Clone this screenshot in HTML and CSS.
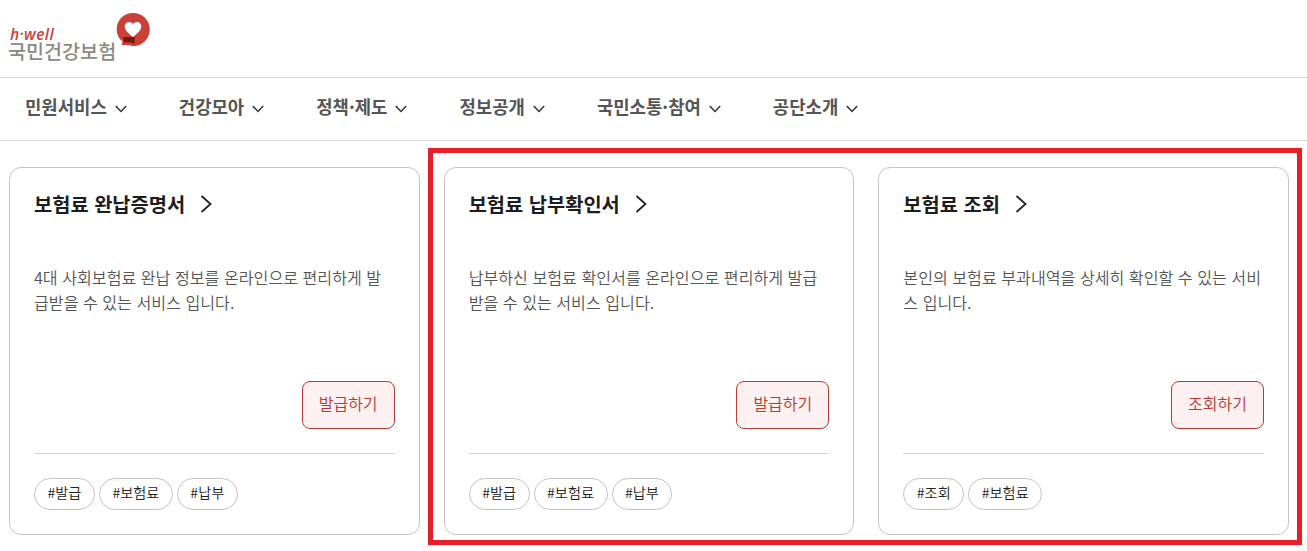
FILE: index.html
```
<!DOCTYPE html>
<html lang="ko">
<head>
    <meta charset="UTF-8">
    <meta name="viewport" content="width=device-width, initial-scale=1.0">
    <title>국민건강보험</title>
    <link rel="stylesheet" href="styles.css">
</head>
<body>

    <!-- HEADER -->
    <header class="header">
        <a class="logo" href="#">
            <span class="logo-text">
                <span class="logo-en">h·well</span>
                <span class="logo-ko">국민건강보험</span>
            </span>
            <svg class="logo-mark" viewBox="0 0 34 35" width="34" height="35">
                <path d="M17 0C26.5 0 33.8 7.3 33.8 16.5S26.5 33.2 17 33.2C13 31.800 9 31.800 5.600 32.500L6.600 28.500C2.500 25.500.7 21 .7 16.500.7 7.300 7.500 0 17 0Z" fill="#cb4138"/>
                <path d="M7.500 24H18.700V30.500C15 29.200 11 29 7.500 29.500Z" fill="#7d1511"/>
                <path d="M17 24C13 21 8.700 17.500 8.700 13.300 8.700 10.500 10.600 8.900 12.900 8.900 14.800 8.900 16.200 9.700 17 11.300 17.800 9.700 19.200 8.900 21.100 8.900 23.500 8.900 25.300 10.500 25.300 13.300 25.300 17.500 21 21 17 24Z" fill="#fff"/>
            </svg>
        </a>
    </header>

    <!-- MENU -->
    <nav class="menu">
        <a href="#">민원서비스 <svg class="arrow-down" viewBox="0 0 12 8"><path d="M.8 1 6 6.500 11.200 1"/></svg></a>
        <a href="#">건강모아 <svg class="arrow-down" viewBox="0 0 12 8"><path d="M.8 1 6 6.500 11.200 1"/></svg></a>
        <a href="#">정책·제도 <svg class="arrow-down" viewBox="0 0 12 8"><path d="M.8 1 6 6.500 11.200 1"/></svg></a>
        <a href="#">정보공개 <svg class="arrow-down" viewBox="0 0 12 8"><path d="M.8 1 6 6.500 11.200 1"/></svg></a>
        <a href="#">국민소통·참여 <svg class="arrow-down" viewBox="0 0 12 8"><path d="M.8 1 6 6.500 11.200 1"/></svg></a>
        <a href="#">공단소개 <svg class="arrow-down" viewBox="0 0 12 8"><path d="M.8 1 6 6.500 11.200 1"/></svg></a>
    </nav>

    <!-- SERVICE CARDS -->
    <main class="cards">
        <section class="card">
            <h2>보험료 완납증명서 <svg class="arrow-right" viewBox="0 0 12 18"><path d="M1.500 1 10.500 9 1.500 17"/></svg></h2>
            <p>4대 사회보험료 완납 정보를 온라인으로 편리하게 발급받을 수 있는 서비스 입니다.</p>
            <a class="btn" href="#">발급하기</a>
            <div class="tags">
                <span>#발급</span>
                <span>#보험료</span>
                <span>#납부</span>
            </div>
        </section>
        <section class="card">
            <h2>보험료 납부확인서 <svg class="arrow-right" viewBox="0 0 12 18"><path d="M1.500 1 10.500 9 1.500 17"/></svg></h2>
            <p>납부하신 보험료 확인서를 온라인으로 편리하게 발급받을 수 있는 서비스 입니다.</p>
            <a class="btn" href="#">발급하기</a>
            <div class="tags">
                <span>#발급</span>
                <span>#보험료</span>
                <span>#납부</span>
            </div>
        </section>
        <section class="card">
            <h2>보험료 조회 <svg class="arrow-right" viewBox="0 0 12 18"><path d="M1.500 1 10.500 9 1.500 17"/></svg></h2>
            <p>본인의 보험료 부과내역을 상세히 확인할 수 있는 서비스 입니다.</p>
            <a class="btn" href="#">조회하기</a>
            <div class="tags">
                <span>#조회</span>
                <span>#보험료</span>
            </div>
        </section>
        <div class="highlight"></div>
    </main>

</body>
</html>
```
FILE: styles.css
```
* {
    box-sizing: border-box;
}
body {
    margin: 0;
    height: 551px;
    background: #fff;
    font-family: "Noto Sans CJK KR", "Noto Sans", sans-serif;
    overflow: hidden;
}
a {
    color: inherit;
    text-decoration: none;
}

/* HEADER */
.header {
    height: 78px;
    padding: 13px 0 0 9px;
    border-bottom: 1px solid #d8d8d8;
}
.logo {
    display: flex;
    align-items: flex-start;
}
.logo-text {
    display: flex;
    flex-direction: column;
    width: 107px;
    padding-top: 14px;
    white-space: nowrap;
}
.logo-en {
    font-family: "Open Sans", sans-serif;
    font-size: 15.5px;
    font-style: italic;
    font-weight: 600;
    line-height: 14px;
    letter-spacing: 0.4px;
    color: #cb4138;
    padding-left: 1px;
}
.logo-ko {
    font-size: 19.6px;
    font-weight: 500;
    line-height: 20px;
    margin-left: -1px;
    color: #8d8a7f;
}

/* MENU */
.menu {
    display: flex;
    align-items: center;
    gap: 52px;
    height: 63px;
    padding: 0 25px 6px;
    border-bottom: 1px solid #d8d8d8;
    font-size: 17.8px;
    font-weight: 700;
    color: #555;
}
.menu a {
    display: flex;
    align-items: center;
    gap: 8px;
    white-space: nowrap;
}
.arrow-down {
    width: 12px;
    height: 8px;
    margin-top: 6px;
    fill: none;
    stroke: #333;
    stroke-width: 1.5;
}

/* CARDS */
.cards {
    position: relative;
    display: grid;
    grid-template-columns: repeat(3, 1fr);
    gap: 24px;
    width: 1280px;
    margin: 26px 0 0 9px;
}
.card {
    display: flex;
    flex-direction: column;
    height: 368px;
    padding: 21px 24px 24px;
    border: 1px solid #c4c4c4;
    border-radius: 12px;
}
.card h2 {
    display: flex;
    align-items: center;
    gap: 15px;
    margin: 0;
    font-size: 19.8px;
    font-weight: 700;
    line-height: 30px;
    color: #1d1d1d;
}
.arrow-right {
    width: 12px;
    height: 18px;
    fill: none;
    stroke: #222;
    stroke-width: 1.8;
}
.card p {
    height: 100px;
    margin: 46px 0 0;
    font-size: 16.13px;
    font-weight: 350;
    line-height: 25px;
    color: #555;
    word-break: break-all;
}
.btn {
    align-self: flex-end;
    width: 93px;
    height: 48px;
    margin-top: 16px;
    border: 1px solid #b93a32;
    border-radius: 8px;
    background: #fcf0f0;
    font-size: 16px;
    font-weight: 350;
    line-height: 43px;
    text-align: center;
    color: #b93a32;
}

/* TAGS */
.tags {
    display: flex;
    gap: 4px;
    margin-top: 24px;
    padding-top: 24px;
    border-top: 1px solid #d4d4d4;
}
.tags span {
    height: 32px;
    padding: 0 12.5px;
    border: 1px solid #c4c4c4;
    border-radius: 16px;
    font-size: 14.2px;
    font-weight: 350;
    line-height: 27px;
    color: #222;
}

/* HIGHLIGHT FRAME */
.highlight {
    position: absolute;
    top: -19px;
    left: 419px;
    width: 874px;
    height: 397px;
    border: 5px solid #e71f26;
    pointer-events: none;
}
```
